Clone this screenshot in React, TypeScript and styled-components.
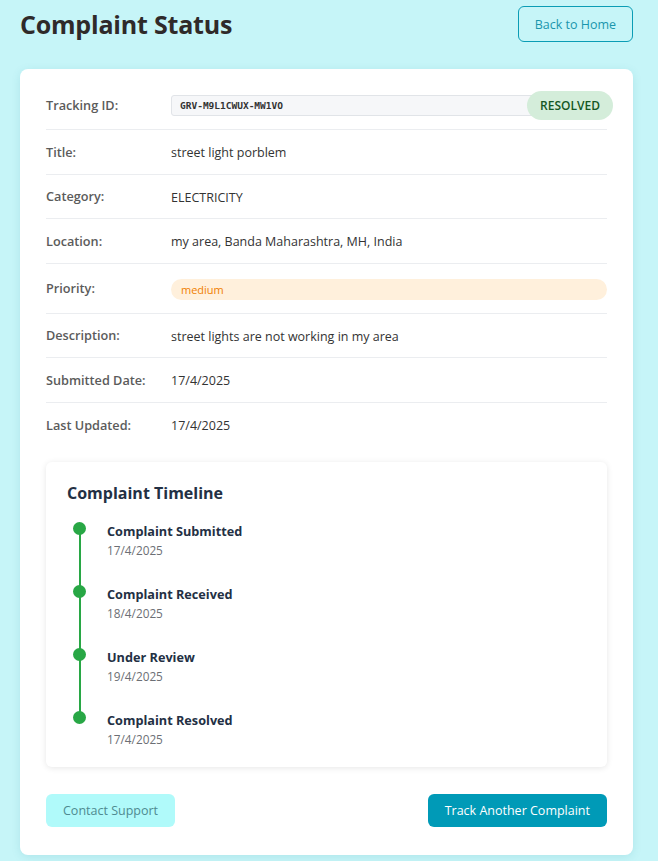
import * as React from 'react'
import styled, { createGlobalStyle } from 'styled-components'

const GlobalStyle = createGlobalStyle`
  html, body {
    margin: 0;
    padding: 0;
    background: #c6f5f8;
    font-family: "Open Sans", "Noto Sans", sans-serif;
  }
  * { box-sizing: border-box; }
`

const Page = styled.div`
  padding: 6px 25px 6px 20px;
`

const Header = styled.div`
  display: flex;
  justify-content: space-between;
  align-items: center;
  height: 36px;
  margin-bottom: 27px;
`

const Heading = styled.h1`
  margin: 0;
  font-size: 25px;
  font-weight: 700;
  color: #2f2a2a;
  letter-spacing: -0.2px;
`

const OutlineButton = styled.button`
  height: 36px;
  padding: 0 16px;
  border: 1px solid #0a9cb5;
  border-radius: 6px;
  background: transparent;
  color: #1a96ad;
  font-family: inherit;
  font-size: 12.5px;
`

const Card = styled.div`
  background: #fff;
  border-radius: 8px;
  box-shadow: 0 2px 10px rgba(0, 120, 140, 0.12);
  padding: 11px 26px 28px 26px;
`

const Row = styled.div<{ $last?: boolean; $h?: number }>`
  display: flex;
  align-items: center;
  min-height: ${p => p.$h ?? 44.5}px;
  border-bottom: ${p => (p.$last ? 'none' : '1px solid #ebedf0')};
`

const Label = styled.div`
  width: 125px;
  flex-shrink: 0;
  font-size: 12.7px;
  font-weight: 600;
  color: #5b5b5b;
`

const Value = styled.div`
  flex: 1;
  display: flex;
  align-items: center;
  font-size: 12.5px;
  color: #333;
  padding-top: 2px;
`

const Code = styled.div`
  flex: 1;
  height: 21px;
  display: flex;
  align-items: center;
  padding: 0 8px;
  background: #f6f7f9;
  border: 1px solid #e1e4e8;
  border-radius: 3px;
  font-family: "DejaVu Sans Mono", "Liberation Mono", monospace;
  font-size: 9.5px;
  font-weight: 700;
  color: #333;
`

const StatusBadge = styled.span`
  margin-left: -10px;
  margin-right: -6px;
  height: 29px;
  padding: 0 13px;
  display: flex;
  align-items: center;
  border-radius: 15px;
  background: #d4edda;
  color: #155724;
  font-size: 12px;
  font-weight: 600;
`

const PriorityPill = styled.span`
  flex: 1;
  height: 21px;
  display: flex;
  align-items: center;
  padding: 0 10px;
  border-radius: 11px;
  background: #fff0dc;
  color: #f07f00;
  font-size: 11px;
`

const Timeline = styled.div`
  margin-top: 15px;
  border-radius: 6px;
  box-shadow: 0 1px 6px rgba(0, 0, 0, 0.1);
  padding: 20px 21px 20px 21px;
`

const TimelineTitle = styled.h3`
  margin: 0 0 18px;
  font-size: 16px;
  font-weight: 700;
  color: #233044;
`

const Steps = styled.div`
  display: flex;
  flex-direction: column;
  gap: 27px;
`

const Step = styled.div<{ $last?: boolean }>`
  position: relative;
  padding-left: 40px;

  &::before {
    content: '';
    position: absolute;
    left: 6px;
    top: 0px;
    width: 13px;
    height: 13px;
    border-radius: 50%;
    background: #28a745;
  }

  &::after {
    content: '';
    display: ${p => (p.$last ? 'none' : 'block')};
    position: absolute;
    left: 12px;
    top: 8px;
    width: 1.5px;
    height: 63px;
    background: #28a745;
  }
`

const StepTitle = styled.div`
  font-size: 12.7px;
  font-weight: 700;
  color: #233044;
`

const StepDate = styled.div`
  margin-top: 2px;
  font-size: 11.8px;
  color: #6c6f75;
`

const Actions = styled.div`
  display: flex;
  justify-content: space-between;
  margin-top: 27px;
`

const Button = styled.button<{ $primary?: boolean }>`
  height: 33px;
  padding: 0 17px;
  border: none;
  border-radius: 6px;
  font-family: inherit;
  font-size: 12.5px;
  background: ${p => (p.$primary ? '#009ab7' : '#b0fafa')};
  color: ${p => (p.$primary ? '#fff' : '#4f8a90')};
`

const details = [
  { label: 'Title:', value: 'street light porblem' },
  { label: 'Category:', value: 'ELECTRICITY' },
  { label: 'Location:', value: 'my area, Banda Maharashtra, MH, India' },
]

const dates = [
  { label: 'Description:', value: 'street lights are not working in my area' },
  { label: 'Submitted Date:', value: '17/4/2025' },
  { label: 'Last Updated:', value: '17/4/2025' },
]

const steps = [
  { title: 'Complaint Submitted', date: '17/4/2025' },
  { title: 'Complaint Received', date: '18/4/2025' },
  { title: 'Under Review', date: '19/4/2025' },
  { title: 'Complaint Resolved', date: '17/4/2025' },
]

export default function App() {
  return (
    <Page>
      <GlobalStyle />
      <Header>
        <Heading>Complaint Status</Heading>
        <OutlineButton>Back to Home</OutlineButton>
      </Header>
      <Card>
        <Row $h={50}>
          <Label>Tracking ID:</Label>
          <Value>
            <Code>GRV-M9L1CWUX-MW1VO</Code>
            <StatusBadge>RESOLVED</StatusBadge>
          </Value>
        </Row>
        {details.map(d => (
          <Row key={d.label}>
            <Label>{d.label}</Label>
            <Value>{d.value}</Value>
          </Row>
        ))}
        <Row $h={50}>
          <Label>Priority:</Label>
          <Value>
            <PriorityPill>medium</PriorityPill>
          </Value>
        </Row>
        {dates.map((d, i) => (
          <Row key={d.label} $last={i === dates.length - 1}>
            <Label>{d.label}</Label>
            <Value>{d.value}</Value>
          </Row>
        ))}
        <Timeline>
          <TimelineTitle>Complaint Timeline</TimelineTitle>
          <Steps>
            {steps.map((s, i) => (
              <Step key={s.title} $last={i === steps.length - 1}>
                <StepTitle>{s.title}</StepTitle>
                <StepDate>{s.date}</StepDate>
              </Step>
            ))}
          </Steps>
        </Timeline>
        <Actions>
          <Button>Contact Support</Button>
          <Button $primary>Track Another Complaint</Button>
        </Actions>
      </Card>
    </Page>
  )
}
